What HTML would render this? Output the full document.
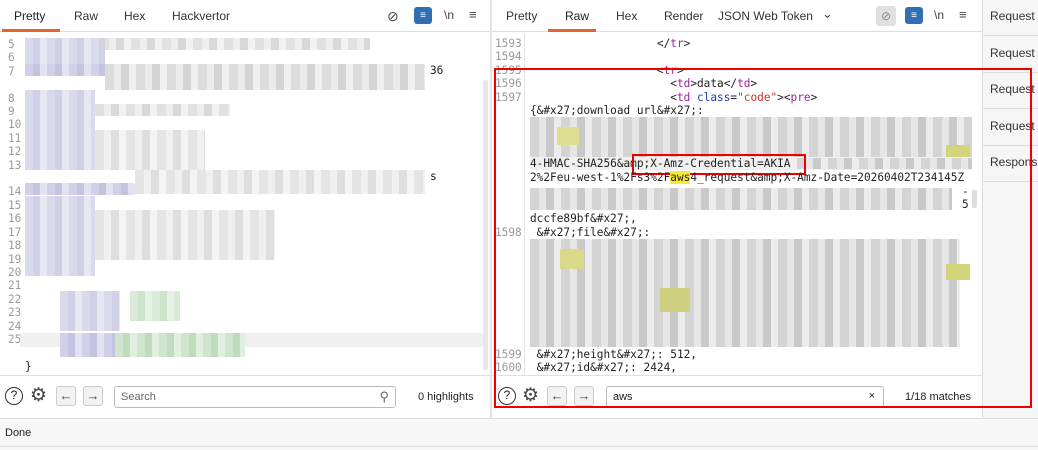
<!DOCTYPE html>
<html><head><style>
*{margin:0;padding:0;box-sizing:border-box}
body{width:1038px;height:450px;background:#fff;font-family:"Liberation Sans",sans-serif;position:relative;overflow:hidden;font-size:12px;color:#222}
.a{position:absolute}
.tab{position:absolute;top:9px;font-size:12px;color:#333}
.mono{font-family:"DejaVu Sans Mono",monospace;font-size:11.1px;white-space:pre;color:#222}
.ln{position:absolute;font-family:"DejaVu Sans Mono",monospace;font-size:11.1px;color:#999}
.blur{position:absolute;background:repeating-linear-gradient(90deg,#d4d4d4 0 9px,#e6e6e6 9px 16px,#c9c9c9 16px 24px,#ececec 24px 31px)}
.bl2{position:absolute;background:repeating-linear-gradient(90deg,#d0d0e8 0 8px,#c4c4e0 8px 15px,#e2e2f0 15px 22px)}
.bg{position:absolute;background:repeating-linear-gradient(90deg,#cfe5cf 0 8px,#bfdcbf 8px 15px,#e0efe0 15px 22px)}
.tag{color:#a020a0}.str{color:#c0392b}.att{color:#1a3fb0}
.btn{position:absolute;width:20px;height:20px;border:1px solid #ccc;border-radius:3px;background:#f2f2f2;text-align:center;line-height:18px;color:#444;font-size:13px}
.sb{position:absolute;left:990px;font-size:12px;white-space:nowrap;color:#333}
</style></head><body>
<div class="a" style="left:0;top:0;width:490px;height:32px;border-bottom:1px solid #ddd"></div>
<div class="tab" style="left:14px;color:#222">Pretty</div>
<div class="a" style="left:2px;top:29px;width:58px;height:3px;background:#e0662d"></div>
<div class="tab" style="left:74px">Raw</div>
<div class="tab" style="left:124px">Hex</div>
<div class="tab" style="left:172px">Hackvertor</div>
<div class="a" style="left:387px;top:8px;font-size:14px;color:#444">&#8856;</div>
<div class="a" style="left:414px;top:7px;width:18px;height:17px;background:#2f6fb3;border-radius:3px;color:#fff;font-size:10px;text-align:center;line-height:17px">&#8801;</div>
<div class="a" style="left:444px;top:8px;font-size:12px;color:#444">\n</div>
<div class="a" style="left:469px;top:7px;font-size:13px;color:#444">&#8801;</div>
<div class="a" style="left:490px;top:0;width:2px;height:418px;background:#e4e4e4"></div>
<div class="a" style="left:483px;top:80px;width:5px;height:290px;background:#e8e8e8;border-radius:2px"></div>
<div class="ln" style="left:8px;top:38px;line-height:13.4px">5<br>6<br>7<br><br>8<br>9<br>10<br>11<br>12<br>13<br><br>14<br>15<br>16<br>17<br>18<br>19<br>20<br>21<br>22<br>23<br>24<br>25</div>
<div class="bl2" style="left:25px;top:38px;width:80px;height:28px;opacity:.8"></div>
<div class="blur" style="left:100px;top:38px;width:270px;height:12px;opacity:.7"></div>
<div class="bl2" style="left:25px;top:64px;width:80px;height:12px"></div>
<div class="blur" style="left:105px;top:64px;width:320px;height:26px;opacity:.8"></div>
<div class="mono a" style="left:430px;top:64px">36</div>
<div class="bl2" style="left:25px;top:90px;width:70px;height:80px;opacity:.8"></div>
<div class="blur" style="left:95px;top:104px;width:135px;height:12px;opacity:.7"></div>
<div class="blur" style="left:95px;top:130px;width:110px;height:40px;opacity:.6"></div>
<div class="bl2" style="left:25px;top:183px;width:110px;height:12px"></div>
<div class="blur" style="left:135px;top:170px;width:290px;height:24px;opacity:.6"></div>
<div class="mono a" style="left:430px;top:170px">s</div>
<div class="bl2" style="left:25px;top:196px;width:70px;height:80px;opacity:.8"></div>
<div class="blur" style="left:95px;top:210px;width:180px;height:50px;opacity:.6"></div>
<div class="bl2" style="left:60px;top:291px;width:60px;height:40px;opacity:.8"></div>
<div class="bg" style="left:130px;top:291px;width:50px;height:30px;opacity:.8"></div>
<div class="a" style="left:20px;top:333px;width:463px;height:14px;background:#f0f0f0"></div>
<div class="bl2" style="left:60px;top:333px;width:55px;height:24px"></div>
<div class="bg" style="left:115px;top:333px;width:130px;height:24px"></div>
<div class="mono a" style="left:25px;top:360px">}</div>
<div class="a" style="left:0;top:375px;width:490px;height:1px;background:#e0e0e0"></div>
<div class="a" style="left:5px;top:387px;width:18px;height:18px;border:1.5px solid #333;border-radius:50%;text-align:center;font-size:12px;line-height:15px">?</div>
<div class="a" style="left:30px;top:384px;font-size:19px;color:#444">&#9881;</div>
<div class="btn" style="left:56px;top:386px">&#8592;</div>
<div class="btn" style="left:83px;top:386px">&#8594;</div>
<div class="a" style="left:114px;top:386px;width:282px;height:22px;border:1px solid #bbb;border-radius:3px;padding:4px 6px;color:#666;font-size:11px">Search<span style="position:absolute;right:6px;top:2px;font-size:13px">&#9906;</span></div>
<div class="a" style="left:418px;top:391px;font-size:11px">0 highlights</div>
<div class="a" style="left:492px;top:0;width:490px;height:32px;border-bottom:1px solid #ddd"></div>
<div class="tab" style="left:506px">Pretty</div>
<div class="tab" style="left:565px;color:#222">Raw</div>
<div class="a" style="left:548px;top:29px;width:48px;height:3px;background:#e0662d"></div>
<div class="tab" style="left:616px">Hex</div>
<div class="tab" style="left:664px">Render</div>
<div class="tab" style="left:718px">JSON Web Token</div>
<div class="a" style="left:822px;top:6px;font-size:13px;color:#444">&#8964;</div>
<div class="a" style="left:876px;top:6px;width:20px;height:20px;background:#e0e0e0;border-radius:3px;text-align:center;line-height:20px;color:#888">&#8856;</div>
<div class="a" style="left:905px;top:7px;width:18px;height:17px;background:#2f6fb3;border-radius:3px;color:#fff;font-size:10px;text-align:center;line-height:17px">&#8801;</div>
<div class="a" style="left:934px;top:8px;color:#444">\n</div>
<div class="a" style="left:959px;top:7px;font-size:13px;color:#444">&#8801;</div>
<div class="a" style="left:524px;top:33px;width:1px;height:342px;background:#e4e4e4"></div>
<div class="ln" style="left:495px;top:37px;line-height:13.4px">1593<br>1594<br>1595<br>1596<br>1597</div>
<div class="mono a" style="left:530px;top:37px;line-height:13.4px">                   &lt;/<span class="tag">tr</span>&gt;

                   &lt;<span class="tag">tr</span>&gt;
                     &lt;<span class="tag">td</span>&gt;data&lt;/<span class="tag">td</span>&gt;
                     &lt;<span class="tag">td</span> <span class="att">class</span>=<span class="str">"code"</span>&gt;&lt;<span class="tag">pre</span>&gt;
{&amp;#x27;download url&amp;#x27;:</div>
<div class="blur" style="left:530px;top:117px;width:442px;height:40px"></div>
<div class="a" style="left:557px;top:127px;width:22px;height:18px;background:#dede90"></div>
<div class="a" style="left:946px;top:145px;width:24px;height:12px;background:#d4d47a"></div>
<div class="a" style="left:530px;top:157px;width:442px;height:13px;background:#f0f0f0"></div>
<div class="mono a" style="left:530px;top:157px">4-HMAC-SHA256&amp;amp;X-Amz-Credential=AKIA</div>
<div class="blur" style="left:797px;top:158px;width:175px;height:11px"></div>
<div class="a" style="left:632px;top:154px;width:174px;height:21px;border:2px solid #e00"></div>
<div class="mono a" style="left:530px;top:171px">2%2Feu-west-1%2Fs3%2F<span style="background:#f5e93a">aws</span>4_request&amp;amp;X-Amz-Date=20260402T234145Z</div>
<div class="blur" style="left:530px;top:188px;width:422px;height:22px"></div>
<div class="mono a" style="left:962px;top:185px;line-height:13px">-<br>5</div>
<div class="mono a" style="left:530px;top:212px">dccfe89bf&amp;#x27;,</div>
<div class="ln" style="left:495px;top:226px">1598</div>
<div class="mono a" style="left:530px;top:226px"> &amp;#x27;file&amp;#x27;:</div>
<div class="blur" style="left:530px;top:239px;width:430px;height:108px"></div>
<div class="a" style="left:560px;top:249px;width:24px;height:20px;background:#d9d98a"></div>
<div class="a" style="left:946px;top:264px;width:24px;height:16px;background:#d4d47a"></div>
<div class="a" style="left:660px;top:288px;width:30px;height:24px;background:#cfcf80"></div>
<div class="ln" style="left:495px;top:348px;line-height:13.4px">1599<br>1600</div>
<div class="mono a" style="left:530px;top:348px;line-height:13.4px"> &amp;#x27;height&amp;#x27;: 512,
 &amp;#x27;id&amp;#x27;: 2424,</div>
<div class="a" style="left:972px;top:190px;width:5px;height:18px;background:#ddd;border-radius:2px"></div>
<div class="a" style="left:492px;top:375px;width:490px;height:1px;background:#e0e0e0"></div>
<div class="a" style="left:498px;top:387px;width:18px;height:18px;border:1.5px solid #333;border-radius:50%;text-align:center;font-size:12px;line-height:15px">?</div>
<div class="a" style="left:522px;top:384px;font-size:19px;color:#444">&#9881;</div>
<div class="btn" style="left:547px;top:386px">&#8592;</div>
<div class="btn" style="left:574px;top:386px">&#8594;</div>
<div class="a" style="left:606px;top:386px;width:278px;height:22px;border:1px solid #bbb;border-radius:3px;padding:4px 6px;font-size:11px">aws<span style="position:absolute;right:8px;top:3px">&#215;</span></div>
<div class="a" style="left:905px;top:391px;font-size:11px">1/18 matches</div>
<div class="a" style="left:982px;top:0;width:56px;height:418px;background:#f6f6f6;border-left:1px solid #ddd"></div>
<div class="sb" style="top:9px">Request a</div>
<div class="sb" style="top:46px">Request d</div>
<div class="sb" style="top:82px">Request d</div>
<div class="sb" style="top:119px">Request h</div>
<div class="sb" style="top:155px">Response</div>
<div class="a" style="left:983px;top:35px;width:55px;height:1px;background:#ddd"></div>
<div class="a" style="left:983px;top:72px;width:55px;height:1px;background:#ddd"></div>
<div class="a" style="left:983px;top:108px;width:55px;height:1px;background:#ddd"></div>
<div class="a" style="left:983px;top:145px;width:55px;height:1px;background:#ddd"></div>
<div class="a" style="left:983px;top:181px;width:55px;height:1px;background:#ddd"></div>
<div class="a" style="left:0;top:418px;width:1038px;height:32px;background:#f7f7f7;border-top:1px solid #ddd"></div>
<div class="a" style="left:5px;top:427px;font-size:11px">Done</div>
<div class="a" style="left:0;top:446px;width:1038px;height:1px;background:#ddd"></div>
<div class="a" style="left:494px;top:68px;width:538px;height:340px;border:2.5px solid #e00"></div>
</body></html>
